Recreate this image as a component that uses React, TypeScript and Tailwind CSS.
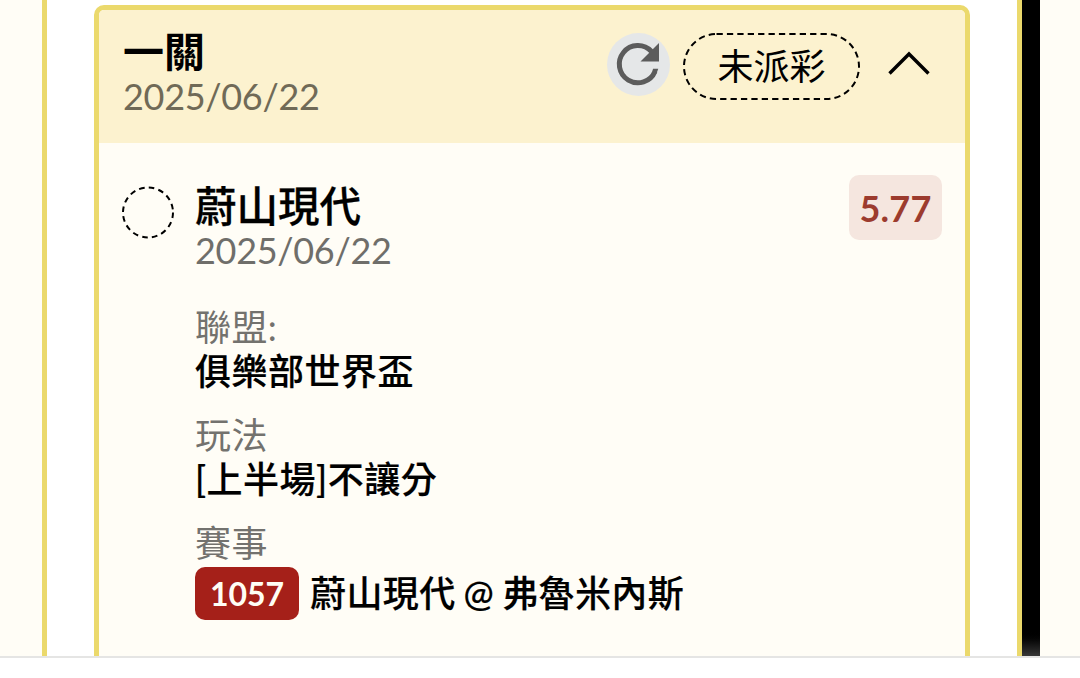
type Field = {
  label: string;
  value: string;
};

const fields: Field[] = [
  { label: "聯盟:", value: "俱樂部世界盃" },
  { label: "玩法", value: "[上半場]不讓分" },
];

function RefreshIcon() {
  return (
    <svg width="63" height="63" viewBox="0 0 63 63" fill="none">
      <path d="M44.5 18.5A18.6 18.6 0 1 0 48 38.5" stroke="#5c5c5c" strokeWidth="5" />
      <path d="M46 35.8H51.3L49.5 40.5L45.5 38Z" fill="#5c5c5c" />
      <path d="M52 10V28.5H33.5Z" fill="#5c5c5c" />
    </svg>
  );
}

function CardHeader() {
  return (
    <div className="flex h-[133px] items-start justify-between bg-[#fcf2cf] pr-[35px] pl-6">
      <div className="pt-[19px]">
        <div className="h-[45px] text-[41px] leading-[46px] font-bold">一關</div>
        <div className="h-11 text-[36px] leading-[44px] tracking-[-0.3px] text-[#706a57]">2025/06/22</div>
      </div>
      <div className="flex items-start pt-[23px]">
        <button className="size-[63px] rounded-full bg-[#e5e7e8]">
          <RefreshIcon />
        </button>
        <svg className="ml-[13px]" width="177" height="67" viewBox="0 0 177 67" fill="none">
          <rect x="1" y="1" width="175" height="65" rx="32.5" stroke="#000" strokeWidth="2" strokeDasharray="6.3 4.1" />
          <text x="88.5" y="46.5" textAnchor="middle" fontSize="36" fill="#000">未派彩</text>
        </svg>
        <svg className="mt-4 ml-7" width="42" height="28" viewBox="0 0 42 28" fill="none">
          <path d="M1.5 24.5 21 5 40.5 24.5" stroke="#000" strokeWidth="3.4" />
        </svg>
      </div>
    </div>
  );
}

function BetDetail() {
  return (
    <div className="flex items-start pr-[23px] pl-[22px] pt-8">
      <svg className="mt-2.5 shrink-0" width="54" height="54" viewBox="0 0 54 54" fill="none">
        <circle cx="27" cy="27.5" r="25" stroke="#000" strokeWidth="2" strokeDasharray="5.6 4.22" />
      </svg>
      <div className="ml-5 flex-1 pt-2">
        <div className="h-[45px] text-[41.5px] leading-[46px] font-medium [-webkit-text-stroke:0.3px_black]">蔚山現代</div>
        <div className="h-11 text-[36px] leading-[44px] tracking-[-0.3px] text-[#6f6e6a]">2025/06/22</div>
        <div className="pt-[34px]">
          {fields.map((f) => (
            <div key={f.label} className="h-[108px]">
              <div className="h-11 text-[36px] leading-[43px] tracking-[0.4px] text-[#73726e]">{f.label}</div>
              <div className="h-[43px] text-[36px] leading-[43px] font-medium tracking-[0.5px] [-webkit-text-stroke:0.2px_black]">
                {f.value}
              </div>
            </div>
          ))}
          <div className="h-[45px] text-[36px] leading-[43px] tracking-[0.4px] text-[#73726e]">賽事</div>
          <div className="flex h-[53px] items-center">
            <span className="flex h-[53px] w-[104px] items-center justify-center rounded-[10px] bg-[#a52019] text-[32px] font-bold text-[#fffdf5]">
              1057
            </span>
            <span className="ml-[11px] text-[36px] leading-[53px] font-medium tracking-[0.4px] whitespace-nowrap [word-spacing:-1.5px] [-webkit-text-stroke:0.2px_black]">
              蔚山現代 @ 弗魯米內斯
            </span>
          </div>
        </div>
      </div>
      <div className="flex h-[65px] w-[93px] items-center justify-center rounded-[10px] bg-[#f5e6df] text-[36px] font-bold tracking-[0.2px] text-[#9c3b2e]">
        5.77
      </div>
    </div>
  );
}

export default function App() {
  return (
    <div className="h-[678px] w-[1080px] overflow-hidden bg-white font-['Lato','Noto_Sans_CJK_TC',sans-serif] text-black">
      <div className="flex h-[656px] overflow-hidden bg-[#fffdf6]">
        <div className="ml-[42px] h-full w-[980px] border-x-[5px] border-[#ebd96c] bg-white px-[47px] pt-[5px]">
          <div className="h-[700px] overflow-hidden rounded-[10px] border-[5px] border-[#ebd96c] bg-[#fffdf6]">
            <CardHeader />
            <BetDetail />
          </div>
        </div>
        <div className="h-full w-[18px] bg-linear-to-b from-black from-96% to-[#383838]" />
      </div>
      <div className="h-0.5 bg-[#e5e5e4]" />
    </div>
  );
}
